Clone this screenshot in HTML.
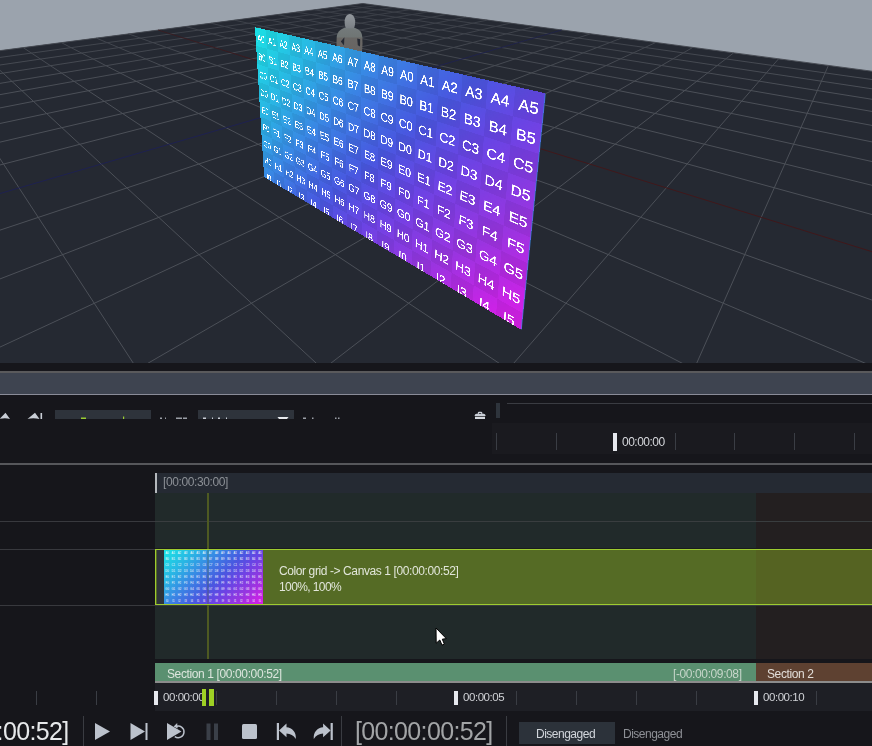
<!DOCTYPE html>
<html><head><meta charset="utf-8"><style>
html,body{margin:0;padding:0}
body{width:872px;height:746px;overflow:hidden;background:#16161b;font-family:"Liberation Sans",sans-serif;position:relative}
.a{position:absolute}
#vp{left:0;top:0;width:872px;height:363px;overflow:hidden;background:#9ba3ad}
#vp svg{position:absolute;left:0;top:0}
#quad{position:absolute;left:0;top:0;width:1600px;height:900px;transform-origin:0 0;overflow:hidden;
 background:linear-gradient(135deg,#1ae0e4 0%,#1ed8e4 5.7%,#2ab4e4 21.7%,#3a84e4 38%,#4858e0 54%,#6a44e4 66%,#9a34e0 82%,#cc22e6 95%,#d820e6 100%)}
#quad i{position:absolute;width:100px;height:103.5px;background:rgba(0,0,0,0.05)}
#quad b{position:absolute;width:100px;height:60px;line-height:60px;text-align:center;color:#fff;font-weight:normal;font-size:55px;-webkit-text-stroke:1px #fff}
.t{white-space:pre;line-height:1;will-change:transform}
</style></head><body>
<div id="vp" class="a">
<svg width="872" height="363" viewBox="0 0 872 363">
<polygon points="0,50.6 362.8,3.5 872,71.3 872,363 0,363" fill="#252932"/>
<g stroke="#4c5058" stroke-width="1"><line x1="362.8" y1="3.5" x2="874.0" y2="71.5"/><line x1="362.8" y1="3.5" x2="-2.0" y2="50.9"/><line x1="347.6" y1="5.5" x2="874.0" y2="79.8"/><line x1="377.5" y1="5.5" x2="-2.0" y2="57.7"/><line x1="331.6" y1="7.6" x2="874.0" y2="89.1"/><line x1="393.0" y1="7.5" x2="-2.0" y2="65.3"/><line x1="314.6" y1="9.8" x2="874.0" y2="99.6"/><line x1="409.6" y1="9.7" x2="-2.0" y2="73.9"/><line x1="296.5" y1="12.1" x2="874.0" y2="111.8"/><line x1="427.2" y1="12.1" x2="-2.0" y2="83.7"/><line x1="277.2" y1="14.6" x2="874.0" y2="125.8"/><line x1="445.9" y1="14.6" x2="-2.0" y2="95.0"/><line x1="256.6" y1="17.3" x2="874.0" y2="142.3"/><line x1="465.9" y1="17.2" x2="-2.0" y2="108.3"/><line x1="234.6" y1="20.2" x2="874.0" y2="162.0"/><line x1="487.3" y1="20.1" x2="-2.0" y2="123.9"/><line x1="211.0" y1="23.2" x2="874.0" y2="185.8"/><line x1="510.3" y1="23.1" x2="-2.0" y2="142.6"/><line x1="185.6" y1="26.5" x2="874.0" y2="215.1"/><line x1="535.0" y1="26.4" x2="-2.0" y2="165.5"/><line x1="128.6" y1="33.9" x2="874.0" y2="300.8"/><line x1="590.4" y1="33.8" x2="-2.0" y2="230.8"/><line x1="96.4" y1="38.1" x2="869.4" y2="365.0"/><line x1="621.6" y1="38.0" x2="-2.0" y2="279.7"/><line x1="61.5" y1="42.7" x2="685.6" y2="365.0"/><line x1="655.7" y1="42.5" x2="-2.0" y2="348.0"/><line x1="23.2" y1="47.6" x2="501.8" y2="365.0"/><line x1="692.8" y1="47.4" x2="144.9" y2="365.0"/><line x1="-2.0" y1="68.5" x2="318.2" y2="365.0"/><line x1="733.6" y1="52.9" x2="328.5" y2="365.0"/><line x1="-2.0" y1="155.6" x2="134.5" y2="365.0"/><line x1="778.6" y1="58.8" x2="512.2" y2="365.0"/><line x1="828.4" y1="65.5" x2="695.9" y2="365.0"/></g>
<line x1="158.2" y1="30.1" x2="874.0" y2="252.3" stroke="#40181b"/><line x1="561.6" y1="30.0" x2="-2.0" y2="194.1" stroke="#1e2150"/>
<defs><linearGradient id="fade" x1="0" y1="0" x2="0" y2="1"><stop offset="0" stop-color="#252932" stop-opacity="0.5"/><stop offset="1" stop-color="#252932" stop-opacity="0"/></linearGradient></defs>
<polygon points="0,50.6 362.8,3.5 872,71.3 872,90 0,90" fill="url(#fade)"/>
<g id="fig">
<defs><linearGradient id="hg" x1="0" y1="0" x2="0" y2="1"><stop offset="0" stop-color="#93989d"/><stop offset="1" stop-color="#7b8085"/></linearGradient>
<linearGradient id="bg" x1="0" y1="0" x2="0" y2="1"><stop offset="0" stop-color="#747a7b"/><stop offset="0.38" stop-color="#6f7574"/><stop offset="0.42" stop-color="#696765"/><stop offset="1" stop-color="#676462"/></linearGradient></defs>
<path d="M344.5,27.8 L354.5,27.8 C356.8,28.6 359,29.6 360.5,31.5 C361.6,33 362.1,35 362.3,37 L362.5,44 L362,52 L337,52 L336.5,44 L336.7,37 C336.9,35 337.6,33 338.8,31.5 C340.5,29.6 342.4,28.6 344.5,27.8Z" fill="url(#bg)"/>
<path d="M349.9,14 C352.6,14.2 354.6,16.6 355.1,20.2 C355.4,23.2 354.9,25.8 353.9,28.2 L345.9,28.2 C344.9,25.8 344.4,23.2 344.7,20.2 C345.2,16.6 347.2,14.2 349.9,14Z" fill="url(#hg)"/>
<path d="M344.4,37.2 L344,45.4 L340.8,41.4Z" fill="#252932"/>
<path d="M357.2,38.5 L360.2,39.2 L360,46.6 L357.8,45.2Z" fill="#252932"/>
</g>
</svg>
<div id="quad" style="transform:matrix3d(0.0368170076,0.01655584801,0,-0.000265344624,0.03630591748,0.1840002161,0,9.918515556e-05,0,0,1,0,255,27.20000076,0,1)">
<i style="left:100px;top:0.0px"></i><i style="left:300px;top:0.0px"></i><i style="left:500px;top:0.0px"></i><i style="left:700px;top:0.0px"></i><i style="left:900px;top:0.0px"></i><i style="left:1100px;top:0.0px"></i><i style="left:1300px;top:0.0px"></i><i style="left:1500px;top:0.0px"></i><i style="left:0px;top:103.5px"></i><i style="left:200px;top:103.5px"></i><i style="left:400px;top:103.5px"></i><i style="left:600px;top:103.5px"></i><i style="left:800px;top:103.5px"></i><i style="left:1000px;top:103.5px"></i><i style="left:1200px;top:103.5px"></i><i style="left:1400px;top:103.5px"></i><i style="left:100px;top:207.0px"></i><i style="left:300px;top:207.0px"></i><i style="left:500px;top:207.0px"></i><i style="left:700px;top:207.0px"></i><i style="left:900px;top:207.0px"></i><i style="left:1100px;top:207.0px"></i><i style="left:1300px;top:207.0px"></i><i style="left:1500px;top:207.0px"></i><i style="left:0px;top:310.5px"></i><i style="left:200px;top:310.5px"></i><i style="left:400px;top:310.5px"></i><i style="left:600px;top:310.5px"></i><i style="left:800px;top:310.5px"></i><i style="left:1000px;top:310.5px"></i><i style="left:1200px;top:310.5px"></i><i style="left:1400px;top:310.5px"></i><i style="left:100px;top:414.0px"></i><i style="left:300px;top:414.0px"></i><i style="left:500px;top:414.0px"></i><i style="left:700px;top:414.0px"></i><i style="left:900px;top:414.0px"></i><i style="left:1100px;top:414.0px"></i><i style="left:1300px;top:414.0px"></i><i style="left:1500px;top:414.0px"></i><i style="left:0px;top:517.5px"></i><i style="left:200px;top:517.5px"></i><i style="left:400px;top:517.5px"></i><i style="left:600px;top:517.5px"></i><i style="left:800px;top:517.5px"></i><i style="left:1000px;top:517.5px"></i><i style="left:1200px;top:517.5px"></i><i style="left:1400px;top:517.5px"></i><i style="left:100px;top:621.0px"></i><i style="left:300px;top:621.0px"></i><i style="left:500px;top:621.0px"></i><i style="left:700px;top:621.0px"></i><i style="left:900px;top:621.0px"></i><i style="left:1100px;top:621.0px"></i><i style="left:1300px;top:621.0px"></i><i style="left:1500px;top:621.0px"></i><i style="left:0px;top:724.5px"></i><i style="left:200px;top:724.5px"></i><i style="left:400px;top:724.5px"></i><i style="left:600px;top:724.5px"></i><i style="left:800px;top:724.5px"></i><i style="left:1000px;top:724.5px"></i><i style="left:1200px;top:724.5px"></i><i style="left:1400px;top:724.5px"></i><i style="left:100px;top:828.0px"></i><i style="left:300px;top:828.0px"></i><i style="left:500px;top:828.0px"></i><i style="left:700px;top:828.0px"></i><i style="left:900px;top:828.0px"></i><i style="left:1100px;top:828.0px"></i><i style="left:1300px;top:828.0px"></i><i style="left:1500px;top:828.0px"></i><b style="left:0px;top:27.0px">A0</b><b style="left:100px;top:27.0px">A1</b><b style="left:200px;top:27.0px">A2</b><b style="left:300px;top:27.0px">A3</b><b style="left:400px;top:27.0px">A4</b><b style="left:500px;top:27.0px">A5</b><b style="left:600px;top:27.0px">A6</b><b style="left:700px;top:27.0px">A7</b><b style="left:800px;top:27.0px">A8</b><b style="left:900px;top:27.0px">A9</b><b style="left:1000px;top:27.0px">A0</b><b style="left:1100px;top:27.0px">A1</b><b style="left:1200px;top:27.0px">A2</b><b style="left:1300px;top:27.0px">A3</b><b style="left:1400px;top:27.0px">A4</b><b style="left:1500px;top:27.0px">A5</b><b style="left:0px;top:130.5px">B0</b><b style="left:100px;top:130.5px">B1</b><b style="left:200px;top:130.5px">B2</b><b style="left:300px;top:130.5px">B3</b><b style="left:400px;top:130.5px">B4</b><b style="left:500px;top:130.5px">B5</b><b style="left:600px;top:130.5px">B6</b><b style="left:700px;top:130.5px">B7</b><b style="left:800px;top:130.5px">B8</b><b style="left:900px;top:130.5px">B9</b><b style="left:1000px;top:130.5px">B0</b><b style="left:1100px;top:130.5px">B1</b><b style="left:1200px;top:130.5px">B2</b><b style="left:1300px;top:130.5px">B3</b><b style="left:1400px;top:130.5px">B4</b><b style="left:1500px;top:130.5px">B5</b><b style="left:0px;top:234.0px">C0</b><b style="left:100px;top:234.0px">C1</b><b style="left:200px;top:234.0px">C2</b><b style="left:300px;top:234.0px">C3</b><b style="left:400px;top:234.0px">C4</b><b style="left:500px;top:234.0px">C5</b><b style="left:600px;top:234.0px">C6</b><b style="left:700px;top:234.0px">C7</b><b style="left:800px;top:234.0px">C8</b><b style="left:900px;top:234.0px">C9</b><b style="left:1000px;top:234.0px">C0</b><b style="left:1100px;top:234.0px">C1</b><b style="left:1200px;top:234.0px">C2</b><b style="left:1300px;top:234.0px">C3</b><b style="left:1400px;top:234.0px">C4</b><b style="left:1500px;top:234.0px">C5</b><b style="left:0px;top:337.5px">D0</b><b style="left:100px;top:337.5px">D1</b><b style="left:200px;top:337.5px">D2</b><b style="left:300px;top:337.5px">D3</b><b style="left:400px;top:337.5px">D4</b><b style="left:500px;top:337.5px">D5</b><b style="left:600px;top:337.5px">D6</b><b style="left:700px;top:337.5px">D7</b><b style="left:800px;top:337.5px">D8</b><b style="left:900px;top:337.5px">D9</b><b style="left:1000px;top:337.5px">D0</b><b style="left:1100px;top:337.5px">D1</b><b style="left:1200px;top:337.5px">D2</b><b style="left:1300px;top:337.5px">D3</b><b style="left:1400px;top:337.5px">D4</b><b style="left:1500px;top:337.5px">D5</b><b style="left:0px;top:441.0px">E0</b><b style="left:100px;top:441.0px">E1</b><b style="left:200px;top:441.0px">E2</b><b style="left:300px;top:441.0px">E3</b><b style="left:400px;top:441.0px">E4</b><b style="left:500px;top:441.0px">E5</b><b style="left:600px;top:441.0px">E6</b><b style="left:700px;top:441.0px">E7</b><b style="left:800px;top:441.0px">E8</b><b style="left:900px;top:441.0px">E9</b><b style="left:1000px;top:441.0px">E0</b><b style="left:1100px;top:441.0px">E1</b><b style="left:1200px;top:441.0px">E2</b><b style="left:1300px;top:441.0px">E3</b><b style="left:1400px;top:441.0px">E4</b><b style="left:1500px;top:441.0px">E5</b><b style="left:0px;top:544.5px">F0</b><b style="left:100px;top:544.5px">F1</b><b style="left:200px;top:544.5px">F2</b><b style="left:300px;top:544.5px">F3</b><b style="left:400px;top:544.5px">F4</b><b style="left:500px;top:544.5px">F5</b><b style="left:600px;top:544.5px">F6</b><b style="left:700px;top:544.5px">F7</b><b style="left:800px;top:544.5px">F8</b><b style="left:900px;top:544.5px">F9</b><b style="left:1000px;top:544.5px">F0</b><b style="left:1100px;top:544.5px">F1</b><b style="left:1200px;top:544.5px">F2</b><b style="left:1300px;top:544.5px">F3</b><b style="left:1400px;top:544.5px">F4</b><b style="left:1500px;top:544.5px">F5</b><b style="left:0px;top:648.0px">G0</b><b style="left:100px;top:648.0px">G1</b><b style="left:200px;top:648.0px">G2</b><b style="left:300px;top:648.0px">G3</b><b style="left:400px;top:648.0px">G4</b><b style="left:500px;top:648.0px">G5</b><b style="left:600px;top:648.0px">G6</b><b style="left:700px;top:648.0px">G7</b><b style="left:800px;top:648.0px">G8</b><b style="left:900px;top:648.0px">G9</b><b style="left:1000px;top:648.0px">G0</b><b style="left:1100px;top:648.0px">G1</b><b style="left:1200px;top:648.0px">G2</b><b style="left:1300px;top:648.0px">G3</b><b style="left:1400px;top:648.0px">G4</b><b style="left:1500px;top:648.0px">G5</b><b style="left:0px;top:751.5px">H0</b><b style="left:100px;top:751.5px">H1</b><b style="left:200px;top:751.5px">H2</b><b style="left:300px;top:751.5px">H3</b><b style="left:400px;top:751.5px">H4</b><b style="left:500px;top:751.5px">H5</b><b style="left:600px;top:751.5px">H6</b><b style="left:700px;top:751.5px">H7</b><b style="left:800px;top:751.5px">H8</b><b style="left:900px;top:751.5px">H9</b><b style="left:1000px;top:751.5px">H0</b><b style="left:1100px;top:751.5px">H1</b><b style="left:1200px;top:751.5px">H2</b><b style="left:1300px;top:751.5px">H3</b><b style="left:1400px;top:751.5px">H4</b><b style="left:1500px;top:751.5px">H5</b><b style="left:0px;top:855.0px">I0</b><b style="left:100px;top:855.0px">I1</b><b style="left:200px;top:855.0px">I2</b><b style="left:300px;top:855.0px">I3</b><b style="left:400px;top:855.0px">I4</b><b style="left:500px;top:855.0px">I5</b><b style="left:600px;top:855.0px">I6</b><b style="left:700px;top:855.0px">I7</b><b style="left:800px;top:855.0px">I8</b><b style="left:900px;top:855.0px">I9</b><b style="left:1000px;top:855.0px">I0</b><b style="left:1100px;top:855.0px">I1</b><b style="left:1200px;top:855.0px">I2</b><b style="left:1300px;top:855.0px">I3</b><b style="left:1400px;top:855.0px">I4</b><b style="left:1500px;top:855.0px">I5</b></div>
<svg width="872" height="363" style="position:absolute;left:0;top:0"><line x1="545.3" y1="93.8" x2="521.3" y2="329.5" stroke="#3a86e6" stroke-width="1" opacity="0.7"/></svg>
</div>

<!-- splitter -->
<div class="a" style="left:0;top:371px;width:872px;height:2px;background:#5a5a5c"></div>
<div class="a" style="left:0;top:373px;width:872px;height:21px;background:#3e4450"></div>
<div class="a" style="left:0;top:394px;width:872px;height:1px;background:#8a8c98"></div>
<!-- toolbar (clipped) -->
<div class="a" style="left:0;top:395px;width:872px;height:24px;overflow:hidden">
 <svg class="a" style="left:0;top:0" width="872" height="24">
  <path d="M-0.5,24 L5.5,17.8 L10,24 Q5,22.5 -0.5,24Z" fill="#c9ced6"/>
  <path d="M27.5,24 L35,17.8 L39.5,24 Q33,22.5 27.5,24Z" fill="#c9ced6"/>
  <rect x="40.5" y="18" width="1.6" height="6" fill="#c9ced6"/>
  <rect x="55" y="15" width="96" height="9" fill="#2e333b"/>
  <rect x="81" y="22.5" width="5" height="1.5" fill="#9acd32"/>
  <rect x="123" y="21.5" width="1.2" height="2.5" fill="#9acd32"/>
  <rect x="160" y="22.5" width="2" height="1.5" fill="#9a9ea6"/>
  <rect x="165" y="22.5" width="1" height="1.5" fill="#9a9ea6"/>
  <rect x="176" y="22.5" width="6" height="1.5" fill="#9a9ea6"/>
  <rect x="183" y="22.5" width="4" height="1.5" fill="#9a9ea6"/>
  <rect x="198" y="15" width="96" height="9" fill="#2e333b"/>
  <rect x="203" y="22.5" width="3" height="1.5" fill="#c9ced6"/>
  <rect x="212" y="22.5" width="1" height="1.5" fill="#c9ced6"/>
  <rect x="218" y="22.5" width="2" height="1.5" fill="#c9ced6"/>
  <rect x="226" y="22.5" width="1" height="1.5" fill="#c9ced6"/>
  <path d="M277.5,22 L288.5,22 L287,24 L279,24Z" fill="#e8eaee"/>
  <rect x="303" y="22.5" width="3" height="1.5" fill="#9a9ea6"/>
  <rect x="312" y="22.5" width="1.5" height="1.5" fill="#9a9ea6"/>
  <rect x="335" y="22.5" width="1.5" height="1.5" fill="#9a9ea6"/>
  <rect x="338" y="22.5" width="1.5" height="1.5" fill="#9a9ea6"/>
  <path d="M477.8,19 L477.8,17.8 Q478,16.8 479,16.8 L481,16.8 Q482.2,16.8 482.3,17.8 L482.3,19 L481.2,19 L481.2,18 L478.9,18 L478.9,19Z" fill="#c9ced6"/>
  <path d="M474.5,21 L475.2,19.2 Q475.5,18.8 476.5,18.8 L483.6,18.8 Q484.6,18.8 485,19.2 L485.7,21Z" fill="#c9ced6"/>
  <rect x="475" y="21.7" width="10" height="3" fill="#d4d8de"/>
 </svg>
</div>
<div class="a" style="left:496px;top:403px;width:4px;height:15px;background:#2e343c"></div>
<div class="a" style="left:507px;top:403px;width:365px;height:1px;background:#3a3c42"></div>
<!-- top ruler -->
<div class="a" style="left:492px;top:423px;width:380px;height:31px;background:#1a1a1f"></div>
<div class="a" style="left:496px;top:433px;width:1px;height:17px;background:#3a3d44"></div><div class="a" style="left:556px;top:433px;width:1px;height:17px;background:#3a3d44"></div><div class="a" style="left:675px;top:433px;width:1px;height:17px;background:#3a3d44"></div><div class="a" style="left:734px;top:433px;width:1px;height:17px;background:#3a3d44"></div><div class="a" style="left:794px;top:433px;width:1px;height:17px;background:#3a3d44"></div><div class="a" style="left:854px;top:433px;width:1px;height:17px;background:#3a3d44"></div><div class="a" style="left:613px;top:433px;width:4px;height:18px;background:#e6e8ee"></div><div class="a t" style="left:622px;top:436px;font-size:12px;letter-spacing:-0.5px;color:#d6d8dc">00:00:00</div>
<div class="a" style="left:0;top:463px;width:872px;height:2px;background:#56575b"></div>
<!-- left column lines -->
<div class="a" style="left:0;top:521px;width:155px;height:1px;background:#38393e"></div>
<div class="a" style="left:0;top:549px;width:155px;height:1px;background:#38393e"></div>
<div class="a" style="left:0;top:605px;width:155px;height:1px;background:#38393e"></div>
<!-- header -->
<div class="a" style="left:155px;top:473px;width:717px;height:20px;background:#252a33"></div>
<div class="a" style="left:155px;top:473px;width:2px;height:20px;background:#b4b8bc"></div>
<div class="a t" style="left:163px;top:476px;font-size:12px;letter-spacing:-0.4px;color:#8c9096">[00:00:30:00]</div>
<!-- tracks -->
<div class="a" style="left:155px;top:493px;width:601px;height:166px;background:#212a2a"></div>
<div class="a" style="left:756px;top:493px;width:116px;height:166px;background:#231f20"></div>
<div class="a" style="left:155px;top:521px;width:717px;height:1px;background:#393d3f"></div>
<div class="a" style="left:155px;top:548px;width:717px;height:1px;background:#1a1c1e"></div>
<div class="a" style="left:155px;top:605px;width:717px;height:1px;background:#393d3f"></div>
<div class="a" style="left:207px;top:493px;width:2px;height:166px;background:#4e5a22"></div>
<!-- clip -->
<div class="a" style="left:155px;top:549px;width:717px;height:56px;box-sizing:border-box;border:1px solid #9ecb30;border-right:none;background:#556b25"></div>
<div class="a" style="left:756px;top:550px;width:116px;height:54px;background:#556322"></div>
<div class="a" style="left:157px;top:550px;width:7px;height:54px;background:#2e343c"></div>
<div id="thumb" class="a" style="left:164px;top:550px;width:99px;height:54px;overflow:hidden;background:linear-gradient(135deg,#1ae0e4 0%,#1ed8e4 5.7%,#2ab4e4 21.7%,#3a84e4 38%,#4858e0 54%,#6a44e4 66%,#9a34e0 82%,#cc22e6 95%,#d820e6 100%)">
 <div style="position:absolute;left:0;top:0;width:1600px;height:900px;transform:scale(0.061875,0.06);transform-origin:0 0"><b style="position:absolute;left:0px;top:20px;width:100px;text-align:center;font:44px/60px 'Liberation Sans';color:#fff">A0</b><b style="position:absolute;left:100px;top:20px;width:100px;text-align:center;font:44px/60px 'Liberation Sans';color:#fff">A1</b><b style="position:absolute;left:200px;top:20px;width:100px;text-align:center;font:44px/60px 'Liberation Sans';color:#fff">A2</b><b style="position:absolute;left:300px;top:20px;width:100px;text-align:center;font:44px/60px 'Liberation Sans';color:#fff">A3</b><b style="position:absolute;left:400px;top:20px;width:100px;text-align:center;font:44px/60px 'Liberation Sans';color:#fff">A4</b><b style="position:absolute;left:500px;top:20px;width:100px;text-align:center;font:44px/60px 'Liberation Sans';color:#fff">A5</b><b style="position:absolute;left:600px;top:20px;width:100px;text-align:center;font:44px/60px 'Liberation Sans';color:#fff">A6</b><b style="position:absolute;left:700px;top:20px;width:100px;text-align:center;font:44px/60px 'Liberation Sans';color:#fff">A7</b><b style="position:absolute;left:800px;top:20px;width:100px;text-align:center;font:44px/60px 'Liberation Sans';color:#fff">A8</b><b style="position:absolute;left:900px;top:20px;width:100px;text-align:center;font:44px/60px 'Liberation Sans';color:#fff">A9</b><b style="position:absolute;left:1000px;top:20px;width:100px;text-align:center;font:44px/60px 'Liberation Sans';color:#fff">A0</b><b style="position:absolute;left:1100px;top:20px;width:100px;text-align:center;font:44px/60px 'Liberation Sans';color:#fff">A1</b><b style="position:absolute;left:1200px;top:20px;width:100px;text-align:center;font:44px/60px 'Liberation Sans';color:#fff">A2</b><b style="position:absolute;left:1300px;top:20px;width:100px;text-align:center;font:44px/60px 'Liberation Sans';color:#fff">A3</b><b style="position:absolute;left:1400px;top:20px;width:100px;text-align:center;font:44px/60px 'Liberation Sans';color:#fff">A4</b><b style="position:absolute;left:1500px;top:20px;width:100px;text-align:center;font:44px/60px 'Liberation Sans';color:#fff">A5</b><b style="position:absolute;left:0px;top:120px;width:100px;text-align:center;font:44px/60px 'Liberation Sans';color:#fff">B0</b><b style="position:absolute;left:100px;top:120px;width:100px;text-align:center;font:44px/60px 'Liberation Sans';color:#fff">B1</b><b style="position:absolute;left:200px;top:120px;width:100px;text-align:center;font:44px/60px 'Liberation Sans';color:#fff">B2</b><b style="position:absolute;left:300px;top:120px;width:100px;text-align:center;font:44px/60px 'Liberation Sans';color:#fff">B3</b><b style="position:absolute;left:400px;top:120px;width:100px;text-align:center;font:44px/60px 'Liberation Sans';color:#fff">B4</b><b style="position:absolute;left:500px;top:120px;width:100px;text-align:center;font:44px/60px 'Liberation Sans';color:#fff">B5</b><b style="position:absolute;left:600px;top:120px;width:100px;text-align:center;font:44px/60px 'Liberation Sans';color:#fff">B6</b><b style="position:absolute;left:700px;top:120px;width:100px;text-align:center;font:44px/60px 'Liberation Sans';color:#fff">B7</b><b style="position:absolute;left:800px;top:120px;width:100px;text-align:center;font:44px/60px 'Liberation Sans';color:#fff">B8</b><b style="position:absolute;left:900px;top:120px;width:100px;text-align:center;font:44px/60px 'Liberation Sans';color:#fff">B9</b><b style="position:absolute;left:1000px;top:120px;width:100px;text-align:center;font:44px/60px 'Liberation Sans';color:#fff">B0</b><b style="position:absolute;left:1100px;top:120px;width:100px;text-align:center;font:44px/60px 'Liberation Sans';color:#fff">B1</b><b style="position:absolute;left:1200px;top:120px;width:100px;text-align:center;font:44px/60px 'Liberation Sans';color:#fff">B2</b><b style="position:absolute;left:1300px;top:120px;width:100px;text-align:center;font:44px/60px 'Liberation Sans';color:#fff">B3</b><b style="position:absolute;left:1400px;top:120px;width:100px;text-align:center;font:44px/60px 'Liberation Sans';color:#fff">B4</b><b style="position:absolute;left:1500px;top:120px;width:100px;text-align:center;font:44px/60px 'Liberation Sans';color:#fff">B5</b><b style="position:absolute;left:0px;top:220px;width:100px;text-align:center;font:44px/60px 'Liberation Sans';color:#fff">C0</b><b style="position:absolute;left:100px;top:220px;width:100px;text-align:center;font:44px/60px 'Liberation Sans';color:#fff">C1</b><b style="position:absolute;left:200px;top:220px;width:100px;text-align:center;font:44px/60px 'Liberation Sans';color:#fff">C2</b><b style="position:absolute;left:300px;top:220px;width:100px;text-align:center;font:44px/60px 'Liberation Sans';color:#fff">C3</b><b style="position:absolute;left:400px;top:220px;width:100px;text-align:center;font:44px/60px 'Liberation Sans';color:#fff">C4</b><b style="position:absolute;left:500px;top:220px;width:100px;text-align:center;font:44px/60px 'Liberation Sans';color:#fff">C5</b><b style="position:absolute;left:600px;top:220px;width:100px;text-align:center;font:44px/60px 'Liberation Sans';color:#fff">C6</b><b style="position:absolute;left:700px;top:220px;width:100px;text-align:center;font:44px/60px 'Liberation Sans';color:#fff">C7</b><b style="position:absolute;left:800px;top:220px;width:100px;text-align:center;font:44px/60px 'Liberation Sans';color:#fff">C8</b><b style="position:absolute;left:900px;top:220px;width:100px;text-align:center;font:44px/60px 'Liberation Sans';color:#fff">C9</b><b style="position:absolute;left:1000px;top:220px;width:100px;text-align:center;font:44px/60px 'Liberation Sans';color:#fff">C0</b><b style="position:absolute;left:1100px;top:220px;width:100px;text-align:center;font:44px/60px 'Liberation Sans';color:#fff">C1</b><b style="position:absolute;left:1200px;top:220px;width:100px;text-align:center;font:44px/60px 'Liberation Sans';color:#fff">C2</b><b style="position:absolute;left:1300px;top:220px;width:100px;text-align:center;font:44px/60px 'Liberation Sans';color:#fff">C3</b><b style="position:absolute;left:1400px;top:220px;width:100px;text-align:center;font:44px/60px 'Liberation Sans';color:#fff">C4</b><b style="position:absolute;left:1500px;top:220px;width:100px;text-align:center;font:44px/60px 'Liberation Sans';color:#fff">C5</b><b style="position:absolute;left:0px;top:320px;width:100px;text-align:center;font:44px/60px 'Liberation Sans';color:#fff">D0</b><b style="position:absolute;left:100px;top:320px;width:100px;text-align:center;font:44px/60px 'Liberation Sans';color:#fff">D1</b><b style="position:absolute;left:200px;top:320px;width:100px;text-align:center;font:44px/60px 'Liberation Sans';color:#fff">D2</b><b style="position:absolute;left:300px;top:320px;width:100px;text-align:center;font:44px/60px 'Liberation Sans';color:#fff">D3</b><b style="position:absolute;left:400px;top:320px;width:100px;text-align:center;font:44px/60px 'Liberation Sans';color:#fff">D4</b><b style="position:absolute;left:500px;top:320px;width:100px;text-align:center;font:44px/60px 'Liberation Sans';color:#fff">D5</b><b style="position:absolute;left:600px;top:320px;width:100px;text-align:center;font:44px/60px 'Liberation Sans';color:#fff">D6</b><b style="position:absolute;left:700px;top:320px;width:100px;text-align:center;font:44px/60px 'Liberation Sans';color:#fff">D7</b><b style="position:absolute;left:800px;top:320px;width:100px;text-align:center;font:44px/60px 'Liberation Sans';color:#fff">D8</b><b style="position:absolute;left:900px;top:320px;width:100px;text-align:center;font:44px/60px 'Liberation Sans';color:#fff">D9</b><b style="position:absolute;left:1000px;top:320px;width:100px;text-align:center;font:44px/60px 'Liberation Sans';color:#fff">D0</b><b style="position:absolute;left:1100px;top:320px;width:100px;text-align:center;font:44px/60px 'Liberation Sans';color:#fff">D1</b><b style="position:absolute;left:1200px;top:320px;width:100px;text-align:center;font:44px/60px 'Liberation Sans';color:#fff">D2</b><b style="position:absolute;left:1300px;top:320px;width:100px;text-align:center;font:44px/60px 'Liberation Sans';color:#fff">D3</b><b style="position:absolute;left:1400px;top:320px;width:100px;text-align:center;font:44px/60px 'Liberation Sans';color:#fff">D4</b><b style="position:absolute;left:1500px;top:320px;width:100px;text-align:center;font:44px/60px 'Liberation Sans';color:#fff">D5</b><b style="position:absolute;left:0px;top:420px;width:100px;text-align:center;font:44px/60px 'Liberation Sans';color:#fff">E0</b><b style="position:absolute;left:100px;top:420px;width:100px;text-align:center;font:44px/60px 'Liberation Sans';color:#fff">E1</b><b style="position:absolute;left:200px;top:420px;width:100px;text-align:center;font:44px/60px 'Liberation Sans';color:#fff">E2</b><b style="position:absolute;left:300px;top:420px;width:100px;text-align:center;font:44px/60px 'Liberation Sans';color:#fff">E3</b><b style="position:absolute;left:400px;top:420px;width:100px;text-align:center;font:44px/60px 'Liberation Sans';color:#fff">E4</b><b style="position:absolute;left:500px;top:420px;width:100px;text-align:center;font:44px/60px 'Liberation Sans';color:#fff">E5</b><b style="position:absolute;left:600px;top:420px;width:100px;text-align:center;font:44px/60px 'Liberation Sans';color:#fff">E6</b><b style="position:absolute;left:700px;top:420px;width:100px;text-align:center;font:44px/60px 'Liberation Sans';color:#fff">E7</b><b style="position:absolute;left:800px;top:420px;width:100px;text-align:center;font:44px/60px 'Liberation Sans';color:#fff">E8</b><b style="position:absolute;left:900px;top:420px;width:100px;text-align:center;font:44px/60px 'Liberation Sans';color:#fff">E9</b><b style="position:absolute;left:1000px;top:420px;width:100px;text-align:center;font:44px/60px 'Liberation Sans';color:#fff">E0</b><b style="position:absolute;left:1100px;top:420px;width:100px;text-align:center;font:44px/60px 'Liberation Sans';color:#fff">E1</b><b style="position:absolute;left:1200px;top:420px;width:100px;text-align:center;font:44px/60px 'Liberation Sans';color:#fff">E2</b><b style="position:absolute;left:1300px;top:420px;width:100px;text-align:center;font:44px/60px 'Liberation Sans';color:#fff">E3</b><b style="position:absolute;left:1400px;top:420px;width:100px;text-align:center;font:44px/60px 'Liberation Sans';color:#fff">E4</b><b style="position:absolute;left:1500px;top:420px;width:100px;text-align:center;font:44px/60px 'Liberation Sans';color:#fff">E5</b><b style="position:absolute;left:0px;top:520px;width:100px;text-align:center;font:44px/60px 'Liberation Sans';color:#fff">F0</b><b style="position:absolute;left:100px;top:520px;width:100px;text-align:center;font:44px/60px 'Liberation Sans';color:#fff">F1</b><b style="position:absolute;left:200px;top:520px;width:100px;text-align:center;font:44px/60px 'Liberation Sans';color:#fff">F2</b><b style="position:absolute;left:300px;top:520px;width:100px;text-align:center;font:44px/60px 'Liberation Sans';color:#fff">F3</b><b style="position:absolute;left:400px;top:520px;width:100px;text-align:center;font:44px/60px 'Liberation Sans';color:#fff">F4</b><b style="position:absolute;left:500px;top:520px;width:100px;text-align:center;font:44px/60px 'Liberation Sans';color:#fff">F5</b><b style="position:absolute;left:600px;top:520px;width:100px;text-align:center;font:44px/60px 'Liberation Sans';color:#fff">F6</b><b style="position:absolute;left:700px;top:520px;width:100px;text-align:center;font:44px/60px 'Liberation Sans';color:#fff">F7</b><b style="position:absolute;left:800px;top:520px;width:100px;text-align:center;font:44px/60px 'Liberation Sans';color:#fff">F8</b><b style="position:absolute;left:900px;top:520px;width:100px;text-align:center;font:44px/60px 'Liberation Sans';color:#fff">F9</b><b style="position:absolute;left:1000px;top:520px;width:100px;text-align:center;font:44px/60px 'Liberation Sans';color:#fff">F0</b><b style="position:absolute;left:1100px;top:520px;width:100px;text-align:center;font:44px/60px 'Liberation Sans';color:#fff">F1</b><b style="position:absolute;left:1200px;top:520px;width:100px;text-align:center;font:44px/60px 'Liberation Sans';color:#fff">F2</b><b style="position:absolute;left:1300px;top:520px;width:100px;text-align:center;font:44px/60px 'Liberation Sans';color:#fff">F3</b><b style="position:absolute;left:1400px;top:520px;width:100px;text-align:center;font:44px/60px 'Liberation Sans';color:#fff">F4</b><b style="position:absolute;left:1500px;top:520px;width:100px;text-align:center;font:44px/60px 'Liberation Sans';color:#fff">F5</b><b style="position:absolute;left:0px;top:620px;width:100px;text-align:center;font:44px/60px 'Liberation Sans';color:#fff">G0</b><b style="position:absolute;left:100px;top:620px;width:100px;text-align:center;font:44px/60px 'Liberation Sans';color:#fff">G1</b><b style="position:absolute;left:200px;top:620px;width:100px;text-align:center;font:44px/60px 'Liberation Sans';color:#fff">G2</b><b style="position:absolute;left:300px;top:620px;width:100px;text-align:center;font:44px/60px 'Liberation Sans';color:#fff">G3</b><b style="position:absolute;left:400px;top:620px;width:100px;text-align:center;font:44px/60px 'Liberation Sans';color:#fff">G4</b><b style="position:absolute;left:500px;top:620px;width:100px;text-align:center;font:44px/60px 'Liberation Sans';color:#fff">G5</b><b style="position:absolute;left:600px;top:620px;width:100px;text-align:center;font:44px/60px 'Liberation Sans';color:#fff">G6</b><b style="position:absolute;left:700px;top:620px;width:100px;text-align:center;font:44px/60px 'Liberation Sans';color:#fff">G7</b><b style="position:absolute;left:800px;top:620px;width:100px;text-align:center;font:44px/60px 'Liberation Sans';color:#fff">G8</b><b style="position:absolute;left:900px;top:620px;width:100px;text-align:center;font:44px/60px 'Liberation Sans';color:#fff">G9</b><b style="position:absolute;left:1000px;top:620px;width:100px;text-align:center;font:44px/60px 'Liberation Sans';color:#fff">G0</b><b style="position:absolute;left:1100px;top:620px;width:100px;text-align:center;font:44px/60px 'Liberation Sans';color:#fff">G1</b><b style="position:absolute;left:1200px;top:620px;width:100px;text-align:center;font:44px/60px 'Liberation Sans';color:#fff">G2</b><b style="position:absolute;left:1300px;top:620px;width:100px;text-align:center;font:44px/60px 'Liberation Sans';color:#fff">G3</b><b style="position:absolute;left:1400px;top:620px;width:100px;text-align:center;font:44px/60px 'Liberation Sans';color:#fff">G4</b><b style="position:absolute;left:1500px;top:620px;width:100px;text-align:center;font:44px/60px 'Liberation Sans';color:#fff">G5</b><b style="position:absolute;left:0px;top:720px;width:100px;text-align:center;font:44px/60px 'Liberation Sans';color:#fff">H0</b><b style="position:absolute;left:100px;top:720px;width:100px;text-align:center;font:44px/60px 'Liberation Sans';color:#fff">H1</b><b style="position:absolute;left:200px;top:720px;width:100px;text-align:center;font:44px/60px 'Liberation Sans';color:#fff">H2</b><b style="position:absolute;left:300px;top:720px;width:100px;text-align:center;font:44px/60px 'Liberation Sans';color:#fff">H3</b><b style="position:absolute;left:400px;top:720px;width:100px;text-align:center;font:44px/60px 'Liberation Sans';color:#fff">H4</b><b style="position:absolute;left:500px;top:720px;width:100px;text-align:center;font:44px/60px 'Liberation Sans';color:#fff">H5</b><b style="position:absolute;left:600px;top:720px;width:100px;text-align:center;font:44px/60px 'Liberation Sans';color:#fff">H6</b><b style="position:absolute;left:700px;top:720px;width:100px;text-align:center;font:44px/60px 'Liberation Sans';color:#fff">H7</b><b style="position:absolute;left:800px;top:720px;width:100px;text-align:center;font:44px/60px 'Liberation Sans';color:#fff">H8</b><b style="position:absolute;left:900px;top:720px;width:100px;text-align:center;font:44px/60px 'Liberation Sans';color:#fff">H9</b><b style="position:absolute;left:1000px;top:720px;width:100px;text-align:center;font:44px/60px 'Liberation Sans';color:#fff">H0</b><b style="position:absolute;left:1100px;top:720px;width:100px;text-align:center;font:44px/60px 'Liberation Sans';color:#fff">H1</b><b style="position:absolute;left:1200px;top:720px;width:100px;text-align:center;font:44px/60px 'Liberation Sans';color:#fff">H2</b><b style="position:absolute;left:1300px;top:720px;width:100px;text-align:center;font:44px/60px 'Liberation Sans';color:#fff">H3</b><b style="position:absolute;left:1400px;top:720px;width:100px;text-align:center;font:44px/60px 'Liberation Sans';color:#fff">H4</b><b style="position:absolute;left:1500px;top:720px;width:100px;text-align:center;font:44px/60px 'Liberation Sans';color:#fff">H5</b><b style="position:absolute;left:0px;top:820px;width:100px;text-align:center;font:44px/60px 'Liberation Sans';color:#fff">I0</b><b style="position:absolute;left:100px;top:820px;width:100px;text-align:center;font:44px/60px 'Liberation Sans';color:#fff">I1</b><b style="position:absolute;left:200px;top:820px;width:100px;text-align:center;font:44px/60px 'Liberation Sans';color:#fff">I2</b><b style="position:absolute;left:300px;top:820px;width:100px;text-align:center;font:44px/60px 'Liberation Sans';color:#fff">I3</b><b style="position:absolute;left:400px;top:820px;width:100px;text-align:center;font:44px/60px 'Liberation Sans';color:#fff">I4</b><b style="position:absolute;left:500px;top:820px;width:100px;text-align:center;font:44px/60px 'Liberation Sans';color:#fff">I5</b><b style="position:absolute;left:600px;top:820px;width:100px;text-align:center;font:44px/60px 'Liberation Sans';color:#fff">I6</b><b style="position:absolute;left:700px;top:820px;width:100px;text-align:center;font:44px/60px 'Liberation Sans';color:#fff">I7</b><b style="position:absolute;left:800px;top:820px;width:100px;text-align:center;font:44px/60px 'Liberation Sans';color:#fff">I8</b><b style="position:absolute;left:900px;top:820px;width:100px;text-align:center;font:44px/60px 'Liberation Sans';color:#fff">I9</b><b style="position:absolute;left:1000px;top:820px;width:100px;text-align:center;font:44px/60px 'Liberation Sans';color:#fff">I0</b><b style="position:absolute;left:1100px;top:820px;width:100px;text-align:center;font:44px/60px 'Liberation Sans';color:#fff">I1</b><b style="position:absolute;left:1200px;top:820px;width:100px;text-align:center;font:44px/60px 'Liberation Sans';color:#fff">I2</b><b style="position:absolute;left:1300px;top:820px;width:100px;text-align:center;font:44px/60px 'Liberation Sans';color:#fff">I3</b><b style="position:absolute;left:1400px;top:820px;width:100px;text-align:center;font:44px/60px 'Liberation Sans';color:#fff">I4</b><b style="position:absolute;left:1500px;top:820px;width:100px;text-align:center;font:44px/60px 'Liberation Sans';color:#fff">I5</b></div>
</div>
<div class="a" style="left:207px;top:550px;width:2px;height:54px;background:rgba(78,90,34,0.25)"></div>
<div class="a t" style="left:279px;top:563px;font-size:12px;letter-spacing:-0.4px;color:#e2e6da;line-height:16px">Color grid -&gt; Canvas 1 [00:00:00:52]<br><span style="letter-spacing:-0.6px">100%, 100%</span></div>
<!-- section bar -->
<div class="a" style="left:155px;top:663px;width:601px;height:18px;background:#5a9070"></div>
<div class="a" style="left:756px;top:663px;width:116px;height:18px;background:#5e4131"></div>
<div class="a" style="left:155px;top:681px;width:717px;height:2px;background:#8c8c8c"></div>
<div class="a t" style="left:167px;top:668px;font-size:12px;letter-spacing:-0.38px;color:#dde6de">Section 1 [00:00:00:52]</div>
<div class="a t" style="left:673px;top:668px;font-size:12px;letter-spacing:-0.39px;color:#c6d6ca">[-00:00:09:08]</div>
<div class="a t" style="left:767px;top:668px;font-size:12px;letter-spacing:-0.39px;color:#e2ddd8">Section 2</div>
<!-- bottom ruler -->
<div class="a" style="left:155px;top:683px;width:717px;height:28px;background:#1e1f25"></div>
<div class="a" style="left:36px;top:691px;width:1px;height:14px;background:#3a3d44"></div><div class="a" style="left:96px;top:691px;width:1px;height:14px;background:#3a3d44"></div><div class="a" style="left:156px;top:691px;width:1px;height:14px;background:#3a3d44"></div><div class="a" style="left:216px;top:691px;width:1px;height:14px;background:#3a3d44"></div><div class="a" style="left:276px;top:691px;width:1px;height:14px;background:#3a3d44"></div><div class="a" style="left:336px;top:691px;width:1px;height:14px;background:#3a3d44"></div><div class="a" style="left:396px;top:691px;width:1px;height:14px;background:#3a3d44"></div><div class="a" style="left:456px;top:691px;width:1px;height:14px;background:#3a3d44"></div><div class="a" style="left:516px;top:691px;width:1px;height:14px;background:#3a3d44"></div><div class="a" style="left:576px;top:691px;width:1px;height:14px;background:#3a3d44"></div><div class="a" style="left:636px;top:691px;width:1px;height:14px;background:#3a3d44"></div><div class="a" style="left:696px;top:691px;width:1px;height:14px;background:#3a3d44"></div><div class="a" style="left:756px;top:691px;width:1px;height:14px;background:#3a3d44"></div><div class="a" style="left:816px;top:691px;width:1px;height:14px;background:#3a3d44"></div><div class="a" style="left:154px;top:691px;width:4px;height:14px;background:#e6e8ee"></div><div class="a t" style="left:163px;top:692px;font-size:11.5px;letter-spacing:-0.45px;color:#d0d2d6">00:00:00</div><div class="a" style="left:454px;top:691px;width:4px;height:14px;background:#e6e8ee"></div><div class="a t" style="left:463px;top:692px;font-size:11.5px;letter-spacing:-0.45px;color:#d0d2d6">00:00:05</div><div class="a" style="left:754px;top:691px;width:4px;height:14px;background:#e6e8ee"></div><div class="a t" style="left:763px;top:692px;font-size:11.5px;letter-spacing:-0.45px;color:#d0d2d6">00:00:10</div><div class="a" style="left:201.5px;top:689px;width:4.5px;height:16.5px;background:#9ed024"></div><div class="a" style="left:209px;top:689px;width:5px;height:16.5px;background:#9ed024"></div>
<!-- transport -->
<div class="a t" style="right:803px;top:719px;font-size:25px;letter-spacing:-0.65px;color:#e6e8ea">[00:00:00:52]</div>
<div class="a" style="left:83px;top:716px;width:1px;height:30px;background:#3a3c42"></div>
<svg class="a" style="left:85px;top:712px" width="260" height="34">
 <path d="M10,11 L25,19.5 L10,28Z" fill="#bcc2cc"/>
 <path d="M45.5,11 L60,19.5 L45.5,28Z" fill="#bcc2cc"/><rect x="60.5" y="11" width="2" height="17" fill="#bcc2cc"/>
 <path d="M82,11 L96.5,19.5 L82,28Z" fill="#bcc2cc"/>
 <path d="M90.8,14.6 A5.8,5.8 0 1 1 89.8,24.6" fill="none" stroke="#bcc2cc" stroke-width="1.5"/><path d="M88.6,14.6 L92.2,11 L92.6,16.6Z" fill="#bcc2cc"/>
 <rect x="121.5" y="11.5" width="4" height="16.5" fill="#3a3f48"/><rect x="129" y="11.5" width="4" height="16.5" fill="#3a3f48"/>
 <rect x="157" y="12" width="15" height="15" rx="1.5" fill="#bcc2cc"/>
 <rect x="191.8" y="11" width="2.2" height="17" fill="#bcc2cc"/>
 <path d="M194,18.4 L201.5,11.6 L201.5,15.2 C207,15.5 211.5,20 210.8,27 C208.5,23.5 205.5,21.8 201.5,21.6 L201.5,25.3Z" fill="#bcc2cc"/>
 <path d="M245.6,18.4 L238.1,11.6 L238.1,15.2 C232.6,15.5 228.1,20 228.8,27 C231.1,23.5 234.1,21.8 238.1,21.6 L238.1,25.3Z" fill="#bcc2cc"/>
 <rect x="245.6" y="11" width="2.2" height="17" fill="#bcc2cc"/>
</svg>
<div class="a" style="left:341px;top:716px;width:1px;height:30px;background:#3a3c42"></div>
<div class="a t" style="left:355px;top:719px;font-size:25px;letter-spacing:-0.65px;color:#a2a4a6">[00:00:00:52]</div>
<div class="a" style="left:506px;top:716px;width:1px;height:30px;background:#3a3c42"></div>
<div class="a" style="left:519px;top:722px;width:96px;height:22px;background:#2c323a"></div>
<div class="a t" style="left:536px;top:728px;font-size:12px;letter-spacing:-0.5px;color:#d2d6dc">Disengaged</div>
<div class="a t" style="left:623px;top:728px;font-size:12px;letter-spacing:-0.5px;color:#8e9096">Disengaged</div>
<svg class="a" style="left:430px;top:622px" width="24" height="28"><path d="M6,6 L16.3,16.6 L12.3,17.2 L14.4,22.2 L12,23.1 L9.8,18 L6.2,21.2Z" fill="#fff" stroke="#000" stroke-width="1" stroke-linejoin="miter"/></svg>
</body></html>
